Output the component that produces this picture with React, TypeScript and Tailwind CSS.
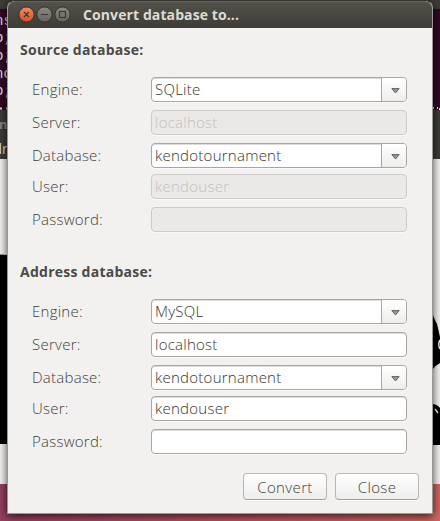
import React from "react";

const FONT = "font-['Open_Sans','Noto_Sans',sans-serif]";

// Terminal and browser windows that peek out behind the dialog.
function Backdrop() {
  return (
    <svg className="absolute inset-0" width="440" height="521" viewBox="0 0 440 521">
      <defs>
        <linearGradient id="desk" x1="0" x2="1" y1="0" y2="0">
          <stop offset="0" stopColor="#933f5e" />
          <stop offset=".5" stopColor="#b3525f" />
          <stop offset="1" stopColor="#cc655d" />
        </linearGradient>
      </defs>
      <rect width="440" height="521" fill="url(#desk)" />
      <rect width="440" height="9" fill="#3c3b37" />
      <rect y="9" width="440" height="101" fill="#300a24" />
      <rect y="110" width="440" height="49" fill="#3c3b37" />
      <rect y="159" width="440" height="325" fill="#f2f1f0" />
      <path d="M0 254.500L8 255V444H0Z" fill="#000" />
      <path d="M432 312L434 318L437 324L440 337V363Q436 365 433 369H432ZM432 404Q437 404 440 408V445H432Z" fill="#000" />
      <path d="M440 340Q437.500 344 440 349M435 409L438 413" stroke="#eee" strokeWidth="1.500" fill="none" />
      <g fill="#e4dfe2" fontFamily="Liberation Mono, monospace" fontSize="14">
        <text x="-5" y="25">ns</text>
        <text x="-5" y="42">o;</text>
        <text x="-5" y="60">o;</text>
        <text x="-5" y="78">nc</text>
        <text x="-5" y="95">o;</text>
      </g>
      <path d="M0 108.500h2M6 108.500h1" stroke="#ddd" strokeWidth="2" />
      <g fill="#dfdbd2" fontFamily="Open Sans, sans-serif">
        <text x="-1" y="129" fontSize="13" fontWeight="700" fill="#8b8880">n</text>
        <text x="-6.500" y="154" fontSize="14">dr</text>
      </g>
      <path d="M433 108h1m3 0h1m1 1h1" stroke="#ddd" strokeWidth="2" />
    </svg>
  );
}

const fieldText = "text-[15px] leading-[25px] font-light whitespace-pre tracking-[0.25px]";

function Field({ label, value = "", combo = false, disabled = false, className = "" }: {
  label: string; value?: string; combo?: boolean; disabled?: boolean; className?: string;
}) {
  return (
    <div className={`flex h-[25px] ${className}`}>
      <div className={`w-[119px] shrink-0 text-[#403f3d] ${fieldText}`}>{label}</div>
      <div
        className={`flex w-[256px] overflow-hidden rounded-[4px] border ${
          disabled
            ? "border-[#cdcbc9] bg-[#eae9e7] shadow-[0_1px_0_#faf9f8]"
            : "border-[#a8a6a1] bg-white shadow-[inset_0_1px_0_#dddcda,0_1px_0_#faf9f8]"
        }`}
      >
        <div className={`-mt-px min-w-0 flex-1 pl-[3px] ${fieldText} ${disabled ? "text-[#c4bfbd]" : "text-[#353432]"}`}>{value}</div>
        {combo && (
          <div className="flex w-[25px] items-center justify-center border-l border-[#a8a6a1] bg-gradient-to-b from-white to-[#ededec] pt-[2px] pl-[2px]">
            <svg width="9" height="6" viewBox="0 0 9 6"><path d="M.8 .6H8.200L4.500 5Z" fill="#999791" stroke="#64635f" /></svg>
          </div>
        )}
      </div>
    </div>
  );
}

function Button({ children }: { children: string }) {
  return (
    <button className="h-[27px] w-[84px] rounded-[4px] border border-[#b9b7b3] border-b-[#a09e99] bg-gradient-to-b from-white to-[#ededec] text-center text-[15px] leading-[24px] font-light tracking-[0.35px] text-[#403f3d] shadow-[0_1px_0_#faf9f8]">
      {children}
    </button>
  );
}

function TitleBar() {
  return (
    <div className="flex h-[27px] items-center rounded-t-[7px] border-t border-[#65635c] bg-gradient-to-b from-[#53514a] to-[#3d3c37] pl-[10px]">
      <svg width="54" height="18" viewBox="0 0 54 18">
        <defs>
          <linearGradient id="close" x1="0" x2="0" y1="0" y2="1"><stop stopColor="#f58b63" /><stop offset="1" stopColor="#e24a1d" /></linearGradient>
          <linearGradient id="ctl" x1="0" x2="0" y1="0" y2="1"><stop stopColor="#8c8a82" /><stop offset="1" stopColor="#65635b" /></linearGradient>
        </defs>
        <g stroke="#33322e" strokeWidth="1">
          <circle cx="8.500" cy="8.500" r="7.600" fill="url(#close)" />
          <circle cx="26.500" cy="8.500" r="7.600" fill="url(#ctl)" />
          <circle cx="44.500" cy="8.500" r="7.600" fill="url(#ctl)" />
        </g>
        <g fill="none" stroke="#3b3833" strokeWidth="1.200">
          <path d="M6 6l5 5M11 6l-5 5M23 8.500h7" />
          <rect x="41.500" y="5.500" width="6" height="6" />
        </g>
      </svg>
      <div className="-mt-px ml-[11px] whitespace-pre text-[14px] leading-[20px] font-bold tracking-[0.1px] text-[#dfdbd2]">Convert database to...</div>
    </div>
  );
}

const heading = "h-[20px] whitespace-pre text-[14px] leading-[20px] font-bold tracking-[0.25px] text-[#4b4a48]";

export default function App() {
  return (
    <div className={`relative h-[521px] w-[440px] overflow-hidden ${FONT}`}>
      <Backdrop />
      <div className="relative ml-[7px] flex h-[514px] w-[426px] flex-col rounded-t-[8px] border border-[#9b9995] border-t-[#33322e] bg-[#f2f1ef] shadow-[0_2px_8px_rgba(0,0,0,0.75)]">
        <TitleBar />
        <div className="pl-[12px]">
          <h2 className={`mt-[12px] ${heading}`}>Source database:</h2>
          <div className="mt-[17px] ml-[12px]">
            <Field label="Engine:" value="SQLite" combo />
            <Field className="mt-[8px]" label="Server:" value="localhost" disabled />
            <Field className="mt-[8px]" label="Database:" value="kendotournament" combo />
            <Field className="mt-[6px]" label="User:" value="kendouser" disabled />
            <Field className="mt-[8px]" label="Password:" disabled />
          </div>
          <h2 className={`mt-[30px] ${heading}`}>Address database:</h2>
          <div className="mt-[17px] ml-[12px]">
            <Field label="Engine:" value="MySQL" combo />
            <Field className="mt-[8px]" label="Server:" value="localhost" />
            <Field className="mt-[8px]" label="Database:" value="kendotournament" combo />
            <Field className="mt-[6px]" label="User:" value="kendouser" />
            <Field className="mt-[8px]" label="Password:" />
          </div>
          <div className="mt-[19px] flex gap-[8px] pl-[223px]">
            <Button>Convert</Button>
            <Button>Close</Button>
          </div>
        </div>
      </div>
    </div>
  );
}
